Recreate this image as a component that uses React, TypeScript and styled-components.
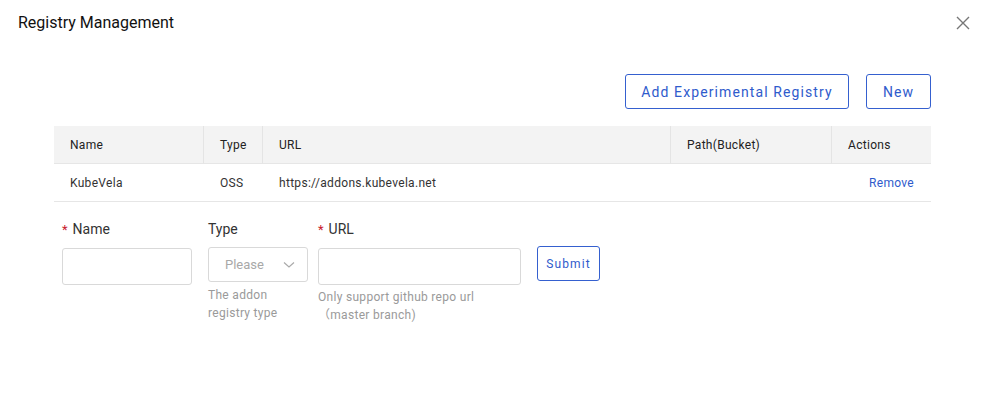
import React from "react";
import styled, { createGlobalStyle } from "styled-components";

const Global = createGlobalStyle`
  html, body { margin: 0; padding: 0; background: #fff; }
  body { font-family: Roboto, "Noto Sans", "Noto Sans CJK SC", sans-serif; color: #1d1d1d; }
  * { box-sizing: border-box; }
`;

const Dialog = styled.div`
  width: 981px;
  height: 413px;
  background: #fff;
  display: flex;
  flex-direction: column;
`;

const Header = styled.div`
  display: flex;
  justify-content: space-between;
  align-items: center;
  padding: 11px 6px 0 18px;
  height: 35px;
`;

const Title = styled.div`
  font-size: 16px;
  line-height: 24px;
  color: #111;
`;

const Close = styled.button`
  width: 24px;
  height: 24px;
  border: 0;
  background: none;
  padding: 0;
  display: flex;
  align-items: center;
  justify-content: center;
  cursor: pointer;
`;

const Body = styled.div`
  padding: 0 50px 0 54px;
  display: flex;
  flex-direction: column;
`;

const Toolbar = styled.div`
  display: flex;
  justify-content: flex-end;
  gap: 17px;
  margin-top: 39px;
`;

const OutlineButton = styled.button<{ $w?: number; $h?: number; $fs?: number }>`
  height: ${(p) => p.$h ?? 35}px;
  ${(p) => (p.$w ? `width: ${p.$w}px;` : "")}
  padding: 0;
  border: 1px solid #3560cf;
  border-radius: 3px;
  background: #fff;
  color: #2f5bcc;
  font-family: Roboto, sans-serif;
  font-size: ${(p) => p.$fs ?? 14}px;
  letter-spacing: 1.1px;
  cursor: pointer;
`;

const Table = styled.div`
  margin-top: 17px;
  display: grid;
  grid-template-columns: 150px 59px 408px 161px 99px;
  font-size: 12px;
  letter-spacing: 0.3px;
`;

const HeadCell = styled.div<{ $last?: boolean }>`
  height: 38px;
  background: #f3f3f3;
  display: flex;
  align-items: center;
  padding-left: 16px;
  color: #222;
  border-right: ${(p) => (p.$last ? "none" : "1px solid #e4e4e4")};
  border-bottom: 1px solid #e6e6e6;
`;

const Cell = styled.div<{ $right?: boolean }>`
  height: 38px;
  display: flex;
  align-items: center;
  padding-left: 16px;
  padding-right: ${(p) => (p.$right ? "17px" : "0")};
  justify-content: ${(p) => (p.$right ? "flex-end" : "flex-start")};
  color: #333;
  border-bottom: 1px solid #e6e6e6;
`;

const LinkText = styled.span`
  color: #2f5bcc;
  cursor: pointer;
`;

const Form = styled.div`
  display: flex;
  align-items: flex-start;
  padding-left: 8px;
  margin-top: 16px;
`;

const Field = styled.div<{ $w: number; $gap: number }>`
  width: ${(p) => p.$w}px;
  margin-right: ${(p) => p.$gap}px;
  display: flex;
  flex-direction: column;
`;

const Label = styled.div`
  font-size: 14px;
  line-height: 22px;
  color: #333;
  margin-bottom: 7px;
  white-space: nowrap;
`;

const Required = styled.span`
  color: #c8202d;
  margin-right: 5px;
  font-size: 13px;
`;

const Input = styled.input`
  width: 100%;
  height: 37px;
  border: 1px solid #d9d9d9;
  border-radius: 3px;
  outline: none;
  padding: 0 10px;
`;

const Select = styled.div`
  width: 100%;
  height: 35px;
  border: 1px solid #d9d9d9;
  border-radius: 3px;
  display: flex;
  align-items: center;
  justify-content: space-between;
  padding: 0 12px 0 16px;
  font-size: 13px;
  color: #a8a8a8;
`;

const Help = styled.div<{ $mt: number }>`
  margin-top: ${(p) => p.$mt}px;
  font-size: 12px;
  line-height: 17.5px;
  letter-spacing: 0.3px;
  color: #9a9a9a;
  white-space: nowrap;
`;

const SubmitWrap = styled.div`
  padding-top: 28px;
`;

export default function App() {
  return (
    <>
      <Global />
      <Dialog>
        <Header>
          <Title>Registry Management</Title>
          <Close aria-label="close">
            <svg width="14" height="14" viewBox="0 0 14 14">
              <path d="M1 1L13 13M13 1L1 13" stroke="#777" strokeWidth="1.4" />
            </svg>
          </Close>
        </Header>
        <Body>
          <Toolbar>
            <OutlineButton $w={224}>Add Experimental Registry</OutlineButton>
            <OutlineButton $w={65}>New</OutlineButton>
          </Toolbar>
          <Table>
            <HeadCell>Name</HeadCell>
            <HeadCell>Type</HeadCell>
            <HeadCell>URL</HeadCell>
            <HeadCell>Path(Bucket)</HeadCell>
            <HeadCell $last>Actions</HeadCell>
            <Cell>KubeVela</Cell>
            <Cell>OSS</Cell>
            <Cell>https://addons.kubevela.net</Cell>
            <Cell />
            <Cell $right>
              <LinkText>Remove</LinkText>
            </Cell>
          </Table>
          <Form>
            <Field $w={130} $gap={16}>
              <Label>
                <Required>*</Required>Name
              </Label>
              <Input />
            </Field>
            <Field $w={100} $gap={10}>
              <Label>Type</Label>
              <Select>
                <span>Please</span>
                <svg width="12" height="8" viewBox="0 0 12 8">
                  <path d="M1 1.5L6 6L11 1.5" stroke="#aaa" strokeWidth="1.2" fill="none" />
                </svg>
              </Select>
              <Help $mt={5}>
                The addon
                <br />
                registry type
              </Help>
            </Field>
            <Field $w={203} $gap={16}>
              <Label>
                <Required>*</Required>URL
              </Label>
              <Input />
              <Help $mt={4}>
                Only support github repo url
                <br />
                （master branch)
              </Help>
            </Field>
            <SubmitWrap>
              <OutlineButton $w={63} $fs={12}>
                Submit
              </OutlineButton>
            </SubmitWrap>
          </Form>
        </Body>
      </Dialog>
    </>
  );
}
